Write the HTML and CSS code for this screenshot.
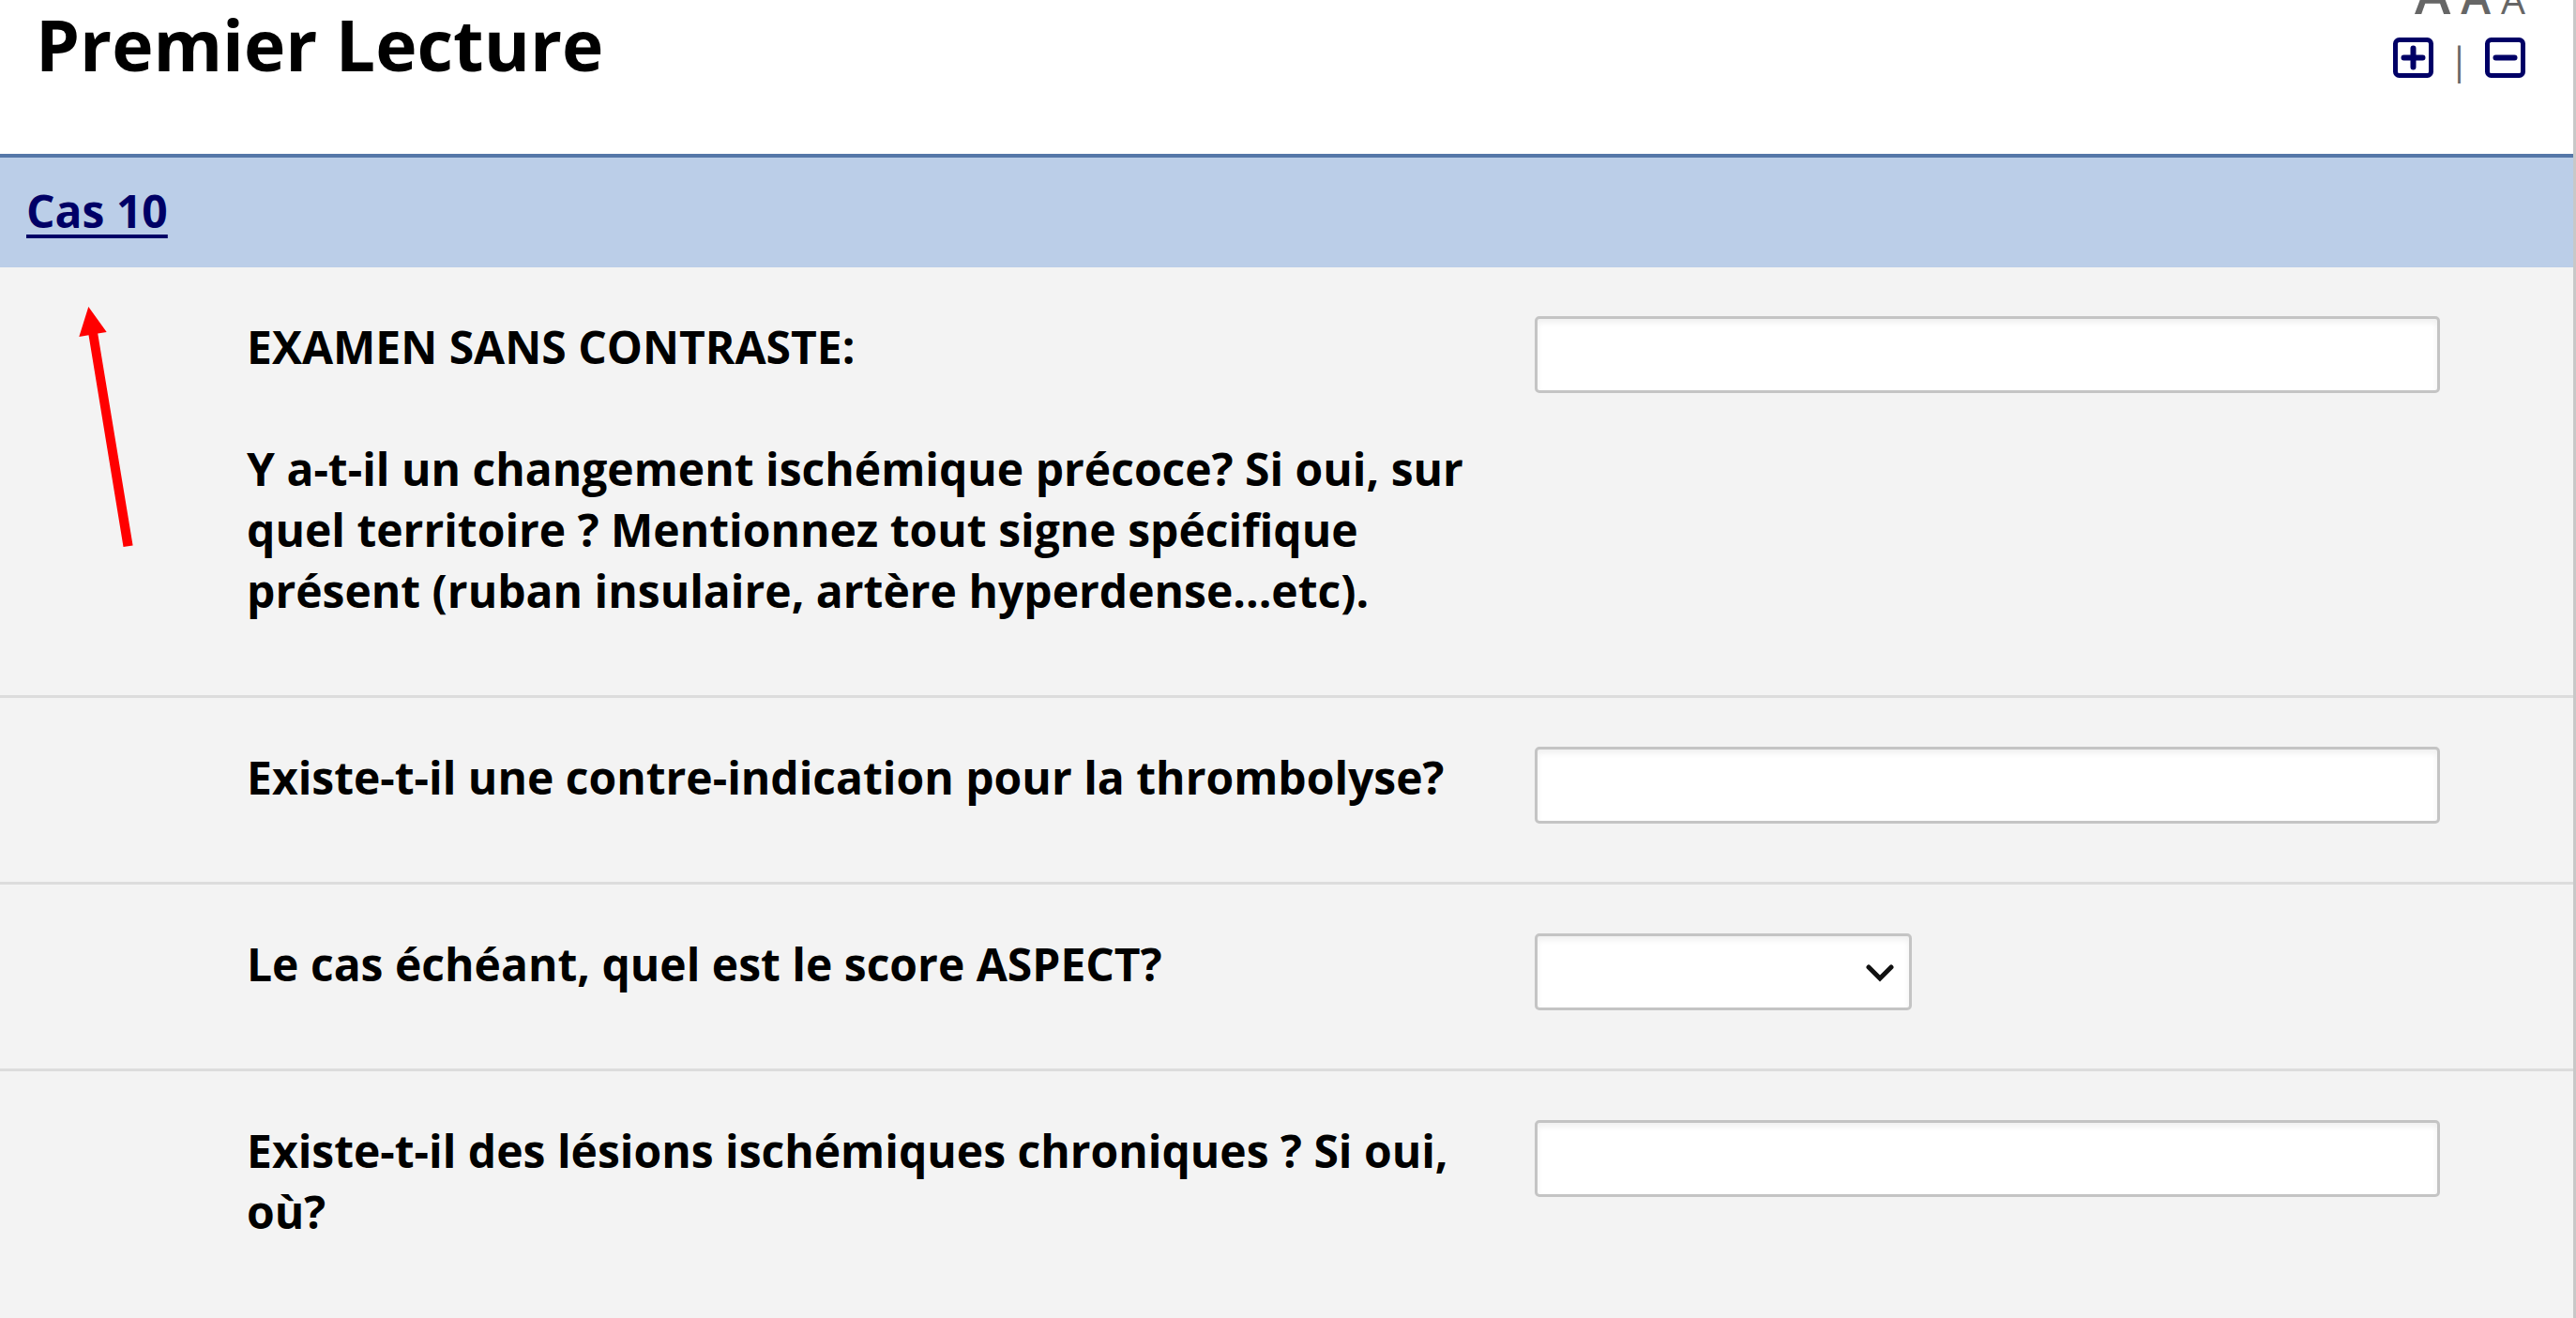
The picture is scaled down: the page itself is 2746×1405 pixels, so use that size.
FILE: index.html
```html
<!DOCTYPE html>
<html lang="fr">
<head>
<meta charset="utf-8">
<title>Premier Lecture</title>
<link rel="stylesheet" href="styles.css">
</head>
<body>
<main class="page">
  <header class="header">
    <h1 class="title">Premier Lecture</h1>
    <div class="tools">
      <div class="sizes">
        <button type="button" class="size size-large">A</button>
        <button type="button" class="size size-medium">A</button>
        <button type="button" class="size size-small">A</button>
      </div>
      <div class="toggles">
        <button type="button" class="toggle" aria-label="+">
          <svg class="toggle-icon" viewBox="0 0 43 43"><rect x="2.5" y="2.5" width="38" height="38" rx="4"/><path d="M11.500 21.500h20M21.500 11.500v20" stroke-width="6"/></svg>
        </button>
        <span class="separator">|</span>
        <button type="button" class="toggle" aria-label="-">
          <svg class="toggle-icon" viewBox="0 0 43 43"><rect x="2.5" y="2.5" width="38" height="38" rx="4"/><path d="M11.500 21.500h20" stroke-width="6"/></svg>
        </button>
      </div>
    </div>
  </header>
  <h2 class="section"><a class="section-link" href="#cas-10">Cas 10</a></h2>
  <form class="questions" id="cas-10">
    <div class="question">
      <label class="label" for="q1">EXAMEN SANS CONTRASTE:<br><br>Y a-t-il un changement ischémique précoce? Si oui, sur quel territoire ? Mentionnez tout signe spécifique présent (ruban insulaire, artère hyperdense...etc).</label>
      <input class="field" id="q1" type="text">
    </div>
    <div class="question">
      <label class="label" for="q2">Existe-t-il une contre-indication pour la thrombolyse?</label>
      <input class="field" id="q2" type="text">
    </div>
    <div class="question">
      <label class="label" for="q3">Le cas échéant, quel est le score ASPECT?</label>
      <div class="select-wrap">
        <select class="field" id="q3"><option></option></select>
        <svg class="chevron" viewBox="0 0 30 20"><path d="M3 3l12 12L27 3"/></svg>
      </div>
    </div>
    <div class="question">
      <label class="label" for="q4">Existe-t-il des lésions ischémiques chroniques ? Si oui, où?</label>
      <input class="field" id="q4" type="text">
    </div>
  </form>
  <svg class="pointer" viewBox="0 0 60 258" aria-hidden="true"><path d="M10.300 0L29.700 27L20.200 28.500L57.600 254.500L47.500 256L10.500 30.300L0.300 32z"/></svg>
</main>
</body>
</html>
```
FILE: styles.css
```css
* {
  box-sizing: border-box;
}

body {
  margin: 0;
  font-family: "Open Sans", sans-serif;
  color: #000;
}

.page {
  position: relative;
  min-height: 100vh;
  overflow: hidden;
  background: #f3f3f3;
  border-right: 3px solid #c8c8c8;
}

.header {
  display: flex;
  justify-content: space-between;
  align-items: flex-start;
  height: 168px;
  padding: 0 51px 0 38px;
  background: #fff;
  border-bottom: 4px solid #5577a8;
}

.title {
  margin: 0;
  font-size: 75px;
  line-height: 94px;
  font-weight: 700;
}

.tools {
  display: flex;
  flex-direction: column;
  align-items: flex-end;
  gap: 28px;
  margin-top: -25px;
}

.sizes {
  display: flex;
  align-items: baseline;
  gap: 11px;
  height: 37px;
}

.size {
  padding: 0;
  border: 0;
  background: none;
  font-family: inherit;
  line-height: 36px;
  color: #666;
}

.size-large {
  font-size: 58px;
  font-weight: 600;
}

.size-medium {
  font-size: 48px;
  font-weight: 600;
}

.size-small {
  font-size: 41px;
}

.toggles {
  display: flex;
  gap: 16px;
}

.toggle {
  display: block;
  padding: 0;
  border: 0;
  background: none;
}

.toggle-icon {
  display: block;
  width: 43px;
  height: 43px;
  fill: none;
  stroke: #000066;
  stroke-width: 5;
  stroke-linecap: round;
}

.separator {
  width: 23px;
  font-size: 40px;
  line-height: 48px;
  height: 43px;
  text-align: center;
  color: #666;
}

.section {
  margin: 0;
  padding: 24px 28px 28px;
  background: #bbcee8;
  font-size: 48px;
  line-height: 65px;
  font-weight: 700;
}

.section-link {
  color: #000066;
  text-decoration-thickness: 4px;
  text-underline-offset: 7px;
}

.question {
  display: grid;
  grid-template-columns: 1337fr 965fr;
  column-gap: 36px;
  align-items: start;
  padding: 52px 142px 79px 263px;
  border-bottom: 3px solid #dcdcdc;
}

.question:last-child {
  padding-bottom: 64px;
  border-bottom: 0;
}

.label {
  font-size: 48px;
  line-height: 65px;
  font-weight: 700;
}

.field {
  display: block;
  width: 100%;
  height: 82px;
  margin-bottom: -20px;
  padding: 0 16px;
  border: 3px solid #c4c4c4;
  border-radius: 5px;
  background: #fff;
  box-shadow: inset 0 4px 6px #f0f0f0;
  font-family: inherit;
  font-size: 48px;
  appearance: none;
}

.select-wrap {
  position: relative;
  width: 402px;
}

.chevron {
  position: absolute;
  top: 33px;
  right: 19px;
  width: 30px;
  height: 20px;
  fill: none;
  stroke: #111;
  stroke-width: 5;
  stroke-linecap: round;
  pointer-events: none;
}

.pointer {
  position: absolute;
  left: 84px;
  top: 327px;
  width: 60px;
  height: 258px;
  fill: #f00;
}
```
